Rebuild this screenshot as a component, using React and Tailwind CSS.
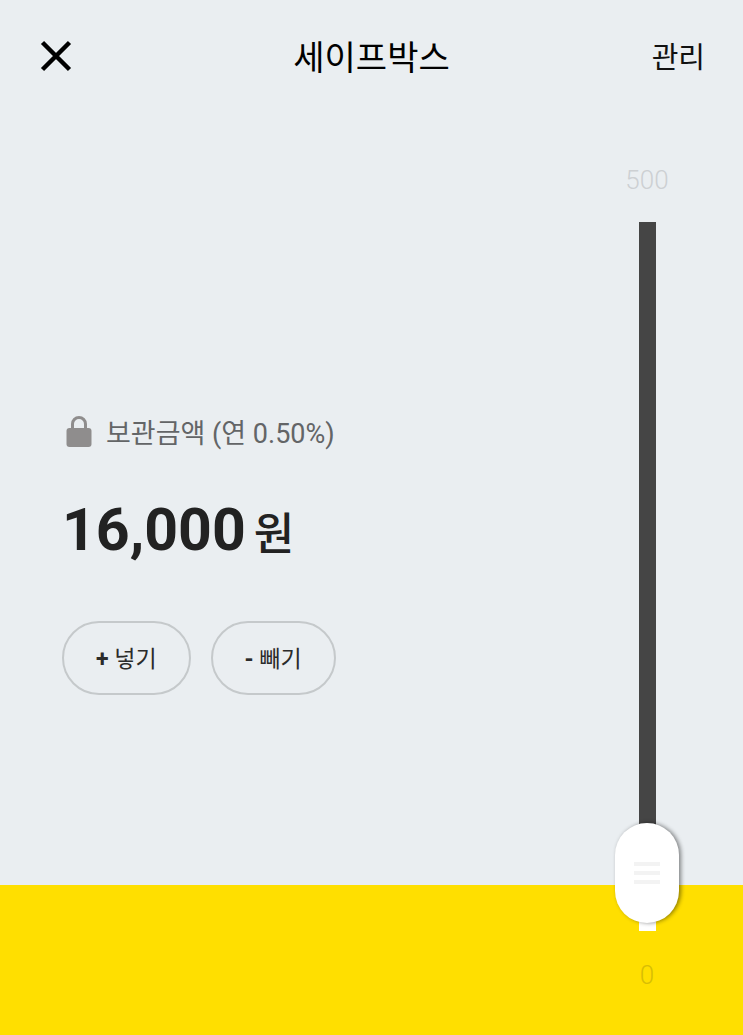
import React, { useState } from 'react'

const MAX = 500

function LockIcon() {
  return (
    <svg viewBox="0 0 26 32" className="w-[26px] h-8" aria-hidden="true">
      <path d="M6.5 15V8a6.5 6.5 0 0 1 13 0V15" fill="none" stroke="#8f8d8d" strokeWidth="3" />
      <rect x="0.5" y="12" width="25" height="19" rx="3" fill="#8f8d8d" />
    </svg>
  )
}

function PillButton({ children }) {
  return (
    <button
      type="button"
      className="h-[74px] px-8 pt-1 rounded-full border-2 border-[#c5c9cb] text-[23px] leading-8 text-[#2b2b2b] whitespace-pre"
    >
      {children}
    </button>
  )
}

function App() {
  // slider unit is 10,000 won
  const [value, setValue] = useState(1.6)
  const amount = Math.round(value * 10000)

  return (
    <div className="min-h-screen flex flex-col font-['Roboto','Noto_Sans_CJK_KR',sans-serif] bg-[linear-gradient(to_top,#ffdf00_150px,#eaeef1_150px)]">
      <header className="h-28 px-[38px] grid grid-cols-[1fr_auto_1fr] items-center">
        <button type="button" aria-label="닫기" className="justify-self-start">
          <svg viewBox="0 0 36 36" className="w-9 h-9" aria-hidden="true">
            <path d="M4.5 4.5L31.5 31.5M31.5 4.5L4.5 31.5" fill="none" stroke="#000" strokeWidth="4.5" />
          </svg>
        </button>
        <h1 className="pt-1 text-[34px] leading-10 text-black">세이프박스</h1>
        <button type="button" className="justify-self-end pt-1 text-[29px] leading-10 text-[#111]">관리</button>
      </header>

      <main className="flex-1 flex justify-between pl-[62px] pr-16">
        <section className="pt-[298px]">
          <div className="flex items-center gap-3.5 pl-1 text-[27px] leading-10 text-[#636567]">
            <LockIcon />
            <p className="pt-1">보관금액 (연 0.50%)</p>
          </div>
          <p className="mt-9 flex items-baseline gap-2 text-[#222]">
            <span className="text-[59px] leading-20 font-bold">
              {amount.toLocaleString('en-US')}
            </span>
            <span className="text-[44px] leading-20 font-medium">원</span>
          </p>
          <div className="mt-[46px] flex gap-5">
            <PillButton><span className="font-bold">+</span> 넣기</PillButton>
            <PillButton><span className="font-bold">-</span> 빼기</PillButton>
          </div>
        </section>

        <div className="flex flex-col items-center pt-12 pb-10 text-[26px] leading-10">
          <span className="font-light text-[#cdd0d3]">{MAX}</span>
          <div className="flex-1 mt-[22px] mb-6 pb-1.5 flex bg-[linear-gradient(to_top,#fff_50px,#454545_50px)] bg-size-[17px_100%] bg-center bg-no-repeat">
            <input
              type="range"
              min="0"
              max={MAX}
              step="0.1"
              value={value}
              onChange={(e) => setValue(Number(e.target.value))}
              aria-label="보관금액"
              className="appearance-none w-16 bg-transparent [writing-mode:vertical-lr] [direction:rtl] [&::-webkit-slider-thumb]:appearance-none [&::-webkit-slider-thumb]:w-16 [&::-webkit-slider-thumb]:h-[100px] [&::-webkit-slider-thumb]:rounded-full [&::-webkit-slider-thumb]:bg-white [&::-webkit-slider-thumb]:bg-[repeating-linear-gradient(#f3f3f3_0px,#f3f3f3_4px,#fff_4px,#fff_9px)] [&::-webkit-slider-thumb]:bg-size-[26px_22px] [&::-webkit-slider-thumb]:bg-center [&::-webkit-slider-thumb]:bg-no-repeat [&::-webkit-slider-thumb]:shadow-[2px_0px_4px_rgba(0,0,0,0.45)]"
            />
          </div>
          <span className="font-light text-[#d8bd05]">0</span>
        </div>
      </main>
    </div>
  )
}

export default App
